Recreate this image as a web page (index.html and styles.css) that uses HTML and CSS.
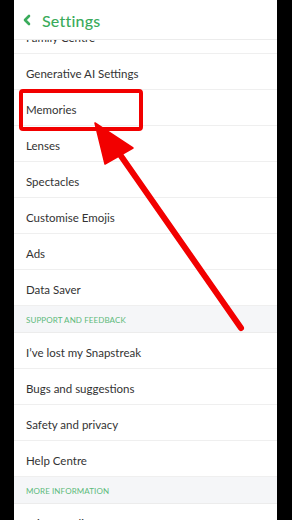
FILE: index.html
```html
<!DOCTYPE html>
<html>
<head>
<meta charset="utf-8">
<link rel="stylesheet" href="styles.css">
</head>
<body>
<div class="screen">
  <div class="panel">
    <div class="header">
      <svg class="chev" width="10" height="12" viewBox="0 0 10 12"><polyline points="7,2 3,6 7,10" fill="none" stroke="#3aab5b" stroke-width="2.6" stroke-linecap="round" stroke-linejoin="round"/></svg>
      <span class="title">Settings</span>
    </div>
    <div class="list">
      <div class="inner">
        <div class="row">Family Centre</div>
        <div class="row">Generative AI Settings</div>
        <div class="row">Memories</div>
        <div class="row">Lenses</div>
        <div class="row">Spectacles</div>
        <div class="row">Customise Emojis</div>
        <div class="row">Ads</div>
        <div class="row">Data Saver</div>
        <div class="section">SUPPORT AND FEEDBACK</div>
        <div class="row">I’ve lost my Snapstreak</div>
        <div class="row">Bugs and suggestions</div>
        <div class="row">Safety and privacy</div>
        <div class="row">Help Centre</div>
        <div class="section">MORE INFORMATION</div>
        <div class="row">Privacy Policy</div>
      </div>
    </div>
    <svg class="annot" width="263" height="520" viewBox="0 0 263 520">
      <rect x="7" y="91" width="120" height="38" rx="2" fill="none" stroke="#f20000" stroke-width="4"/>
      <line x1="100" y1="146" x2="227" y2="328" stroke="#f20000" stroke-width="6" stroke-linecap="round"/>
      <polygon points="81,123 91,164 119,148" fill="#f20000" stroke="#f20000" stroke-width="1.5" stroke-linejoin="round"/>
    </svg>
  </div>
</div>
</body>
</html>
```
FILE: styles.css
```css
html, body {
  margin: 0;
  padding: 0;
  background: #000;
}
.screen {
  display: flex;
  width: 292px;
  height: 520px;
  background: #000;
}
.panel {
  position: relative;
  margin-left: 14px;
  width: 263px;
  height: 520px;
  background: #fff;
  display: flex;
  flex-direction: column;
  overflow: hidden;
  font-family: "Lato", "Open Sans", sans-serif;
}
.header {
  height: 39px;
  flex: none;
  border-bottom: 1px solid #ececec;
  display: flex;
  align-items: center;
  padding-left: 8px;
  gap: 10px;
  background: #fff;
  position: relative;
  z-index: 1;
}
.chev {
  margin-top: 1px;
}
.title {
  font-size: 16px;
  color: #3aab5b;
  font-weight: 500;
  letter-spacing: 0.2px;
  margin-top: 1px;
}
.list {
  flex: 1;
  overflow: hidden;
}
.inner {
  margin-top: -22px;
}
.row {
  box-sizing: border-box;
  height: 36px;
  padding-top: 3px;
  border-bottom: 1px solid #efefef;
  display: flex;
  align-items: center;
  padding-left: 12px;
  font-size: 11.5px;
  color: #333;
  background: #fff;
}
.section {
  height: 26px;
  border-bottom: 1px solid #ececec;
  background: #f5f6f8;
  display: flex;
  align-items: center;
  padding-left: 12px;
  padding-top: 1px;
  box-sizing: border-box;
  height: 27px;
  font-size: 8px;
  color: #5dba7b;
  letter-spacing: 0.1px;
}
.annot {
  position: absolute;
  left: 0;
  top: 0;
  z-index: 2;
}
```
